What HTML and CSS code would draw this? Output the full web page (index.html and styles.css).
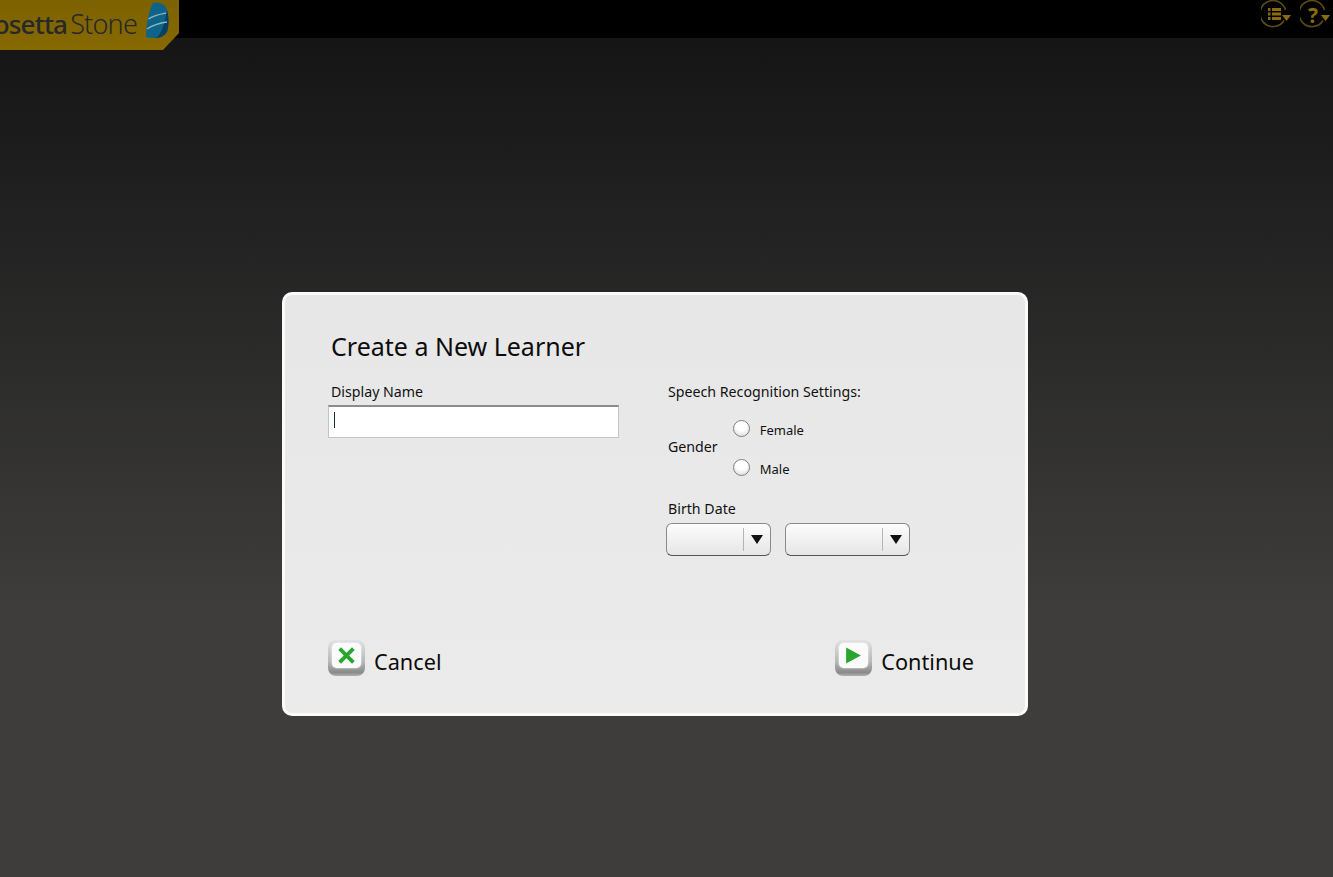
FILE: index.html
```html
<!DOCTYPE html>
<html lang="en">
<head>
    <meta charset="UTF-8">
    <title>Rosetta Stone - Create a New Learner</title>
    <link rel="stylesheet" href="styles.css">
</head>
<body>
    <header class="top-bar">
        <div class="logo">
            <span class="logo-text"><span class="logo-bold">Rosetta</span><span class="logo-light">Stone</span></span>
            <svg class="logo-mark" width="24" height="36" viewBox="0 0 24 36">
                <path d="M8 1 C14 -1 20 2 22 8 C24 15 24 24 22 30 C20 33 16 36 11 36 C7 36 3 36 1 35 C1 26 3 10 8 1Z" fill="#0e6389"/>
                <path d="M22 8 C24 15 24 24 22 30 C20 33 16 36 11 36 C17 32 20 20 22 8Z" fill="#0a3f5e"/>
                <path d="M3.500 17 C9 13 16 12 21 11" fill="none" stroke="#8fb4bd" stroke-width="1.400"/>
                <path d="M2 27 C8 23 15 21 22 20" fill="none" stroke="#8fb4bd" stroke-width="1.400"/>
            </svg>
        </div>
        <div class="top-icons">
            <svg class="top-icon" width="31" height="29" viewBox="0 0 31 29">
                <path d="M23 20.500 A13 13 0 1 1 24.500 10" fill="none" stroke="#5a4a1a" stroke-width="1.600"/>
                <path d="M7 8h2.500v3H7zM7 12.500h2.500v3H7zM7 17h2.500v3H7z" fill="#8a6c0c"/>
                <path d="M11 8h9v3h-9zM11 12.500h9v3h-9zM11 17h9v3h-9z" fill="#8a6c0c"/>
                <path d="M21 15h9l-4.500 6z" fill="#8a6c0c"/>
            </svg>
            <svg class="top-icon" width="31" height="29" viewBox="0 0 31 29">
                <path d="M23 20.500 A13 13 0 1 1 24.500 10" fill="none" stroke="#5a4a1a" stroke-width="1.600"/>
                <text x="13" y="22.500" text-anchor="middle" class="help-glyph">?</text>
                <path d="M21 15h9l-4.500 6z" fill="#8a6c0c"/>
            </svg>
        </div>
    </header>

    <main class="stage">
        <section class="dialog">
            <h1 class="dialog-title">Create a New Learner</h1>
            <div class="form-cols">
                <div class="col-name">
                    <label class="field-label">Display Name</label>
                    <div class="text-field"><span class="caret"></span></div>
                </div>
                <div class="col-speech">
                    <div class="field-label">Speech Recognition Settings:</div>
                    <div class="gender-row">
                        <span class="field-label">Gender</span>
                        <div class="radio-list">
                            <div class="radio-item"><span class="radio"></span><span class="radio-label">Female</span></div>
                            <div class="radio-item"><span class="radio"></span><span class="radio-label">Male</span></div>
                        </div>
                    </div>
                    <div class="field-label birth-label">Birth Date</div>
                    <div class="select-row">
                        <div class="select select-month"><span class="select-arrow"></span></div>
                        <div class="select select-year"><span class="select-arrow"></span></div>
                    </div>
                </div>
            </div>
            <div class="dialog-actions">
                <div class="action">
                    <span class="action-icon">
                        <svg width="18" height="18" viewBox="0 0 18 18"><path d="M2.500 2.500 L15.500 15.500 M15.500 2.500 L2.500 15.500" stroke="#2aa52f" stroke-width="3.600"/></svg>
                    </span>
                    <span class="action-label">Cancel</span>
                </div>
                <div class="action">
                    <span class="action-icon">
                        <svg width="18" height="18" viewBox="0 0 18 18"><path d="M2 1.500 L16 9 L2 16.500Z" fill="#2aa52f"/></svg>
                    </span>
                    <span class="action-label">Continue</span>
                </div>
            </div>
        </section>
    </main>
</body>
</html>
```

FILE: styles.css
```css
* {
    margin: 0;
    padding: 0;
    box-sizing: border-box;
}

body {
    height: 877px;
    overflow: hidden;
    font-family: 'Noto Sans', sans-serif;
    background: linear-gradient(#151515 38px, #3e3d3c 610px);
    color: #111;
}

/* Top bar */
.top-bar {
    height: 38px;
    background: #000;
    display: flex;
    justify-content: space-between;
}

.logo {
    width: 179px;
    height: 50px;
    background: linear-gradient(#7c6200, #876900);
    clip-path: polygon(0 0, 100% 0, 100% 33px, 163px 100%, 0 100%);
    display: flex;
    justify-content: flex-end;
    padding: 2px 10px 0 0;
    gap: 8px;
    flex-shrink: 0;
}

.logo-text {
    display: flex;
    align-items: baseline;
    gap: 3px;
    font-size: 26px;
    line-height: 44px;
    letter-spacing: -0.8px;
    color: #26282b;
    white-space: nowrap;
}

.logo-bold {
    font-weight: 500;
}

.logo-light {
    font-size: 27px;
    font-weight: 300;
}

.logo-mark {
    flex-shrink: 0;
}

.top-icons {
    display: flex;
    gap: 8px;
    padding: 0 2px 0 0;
}

.help-glyph {
    font-family: 'Noto Sans', sans-serif;
    font-size: 21px;
    font-weight: 700;
    fill: #8a6c0c;
}

/* Dialog */
.stage {
    padding: 254px 0 0 282px;
}

.dialog {
    width: 746px;
    height: 424px;
    background: linear-gradient(#e7e7e7, #ebebeb);
    border: 3px solid #fbfbfb;
    border-radius: 10px;
    padding: 33px 51px 33px 43px;
    display: flex;
    flex-direction: column;
}

.dialog-title {
    font-size: 25px;
    font-weight: 400;
    line-height: 36px;
    padding-left: 3px;
    color: #0c0c0c;
}

.form-cols {
    display: flex;
    margin-top: 18px;
}

.col-name {
    width: 338px;
}

.field-label {
    display: block;
    font-size: 14.200px;
    line-height: 20px;
}

.col-name .field-label {
    padding-left: 3px;
    margin-bottom: 3px;
}

.text-field {
    width: 291px;
    height: 33px;
    background: #fff;
    border: 1px solid #c4c4c4;
    border-top: 2px solid #8c8c8c;
    padding: 5px 0 0 5px;
}

.caret {
    display: block;
    width: 1px;
    height: 16px;
    background: #12303a;
}

.col-speech {
    padding-left: 2px;
}

.gender-row {
    display: flex;
    align-items: center;
    margin-top: 17px;
}

.gender-row .field-label {
    margin-top: -1px;
}

.radio-list {
    display: flex;
    flex-direction: column;
    gap: 21px;
    margin-left: 15px;
}

.radio-item {
    display: flex;
    align-items: center;
    gap: 10px;
    height: 18px;
}

.radio {
    width: 17px;
    height: 17px;
    border-radius: 50%;
    border: 1.500px solid #808080;
    background: radial-gradient(circle at 50% 30%, #fff 40%, #d2d2d2 100%);
}

.radio-label {
    font-size: 13px;
    line-height: 18px;
    padding-top: 3px;
}

.birth-label {
    margin-top: 23px;
}

.select-row {
    display: flex;
    gap: 14px;
    margin: 4px 0 0 -2px;
}

.select {
    height: 33px;
    border: 1px solid #8a8a8a;
    border-bottom-color: #555;
    border-radius: 6px;
    background: linear-gradient(#fcfcfc, #e6e6e6);
    display: flex;
    justify-content: flex-end;
    align-items: center;
}

.select-month {
    width: 105px;
}

.select-year {
    width: 125px;
}

.select-arrow {
    width: 27px;
    height: 23px;
    border-left: 1px solid #b5b5b5;
    position: relative;
}

.select-arrow::after {
    content: "";
    position: absolute;
    left: 7px;
    top: 7px;
    border-left: 6px solid transparent;
    border-right: 6px solid transparent;
    border-top: 9px solid #111;
}

/* Cancel / Continue */
.dialog-actions {
    display: flex;
    justify-content: space-between;
    margin-top: auto;
}

.action {
    display: flex;
    align-items: flex-start;
    gap: 9px;
}

.action-icon {
    width: 37px;
    height: 36px;
    border-radius: 8px;
    background: linear-gradient(#e2e2e2, #b8b8b8 60%, #8a8a8a 90%, #b0b0b0);
    padding: 3px 4px 8px;
    display: block;
}

.action-icon svg {
    display: block;
    width: 29px;
    height: 25px;
    padding: 3px 5px;
    background: #fbfbfb;
    border-radius: 5px;
    box-shadow: 0 0 2px #fff;
}

.action-label {
    font-size: 21.700px;
    line-height: 36px;
    padding-top: 4px;
    color: #0c0c0c;
}
```
